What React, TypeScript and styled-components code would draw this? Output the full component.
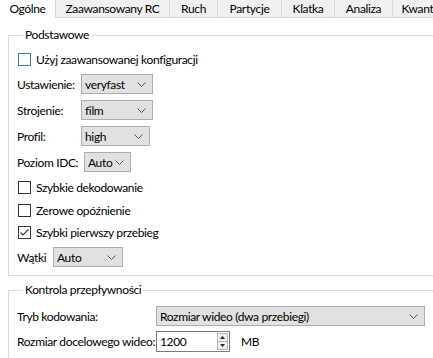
import React from "react";
import styled, { createGlobalStyle } from "styled-components";

const GlobalStyle = createGlobalStyle`
  html, body {
    margin: 0;
    padding: 0;
    overflow: hidden;
    background: #fff;
  }
  body {
    font-family: Lato, "Noto Sans", sans-serif;
    font-size: 12px;
    letter-spacing: -0.35px;
    color: #000;
  }
`;

interface ITab {
  label: string;
  width: number;
}

const tabs: ITab[] = [
  { label: "Ogólne", width: 56 },
  { label: "Zaawansowany RC", width: 114 },
  { label: "Ruch", width: 48 },
  { label: "Partycje", width: 64 },
  { label: "Klatka", width: 53 },
  { label: "Analiza", width: 58 },
  { label: "Kwantyzacja", width: 80 },
];

const Chevron = () => (
  <svg width="9" height="5" viewBox="0 0 9 5">
    <path d="M0.5 0.5 L4.5 4.5 L8.5 0.5" fill="none" stroke="#555" strokeWidth="1" />
  </svg>
);

interface ComboProps {
  value: string;
  width: number;
}

const Combo = ({ value, width }: ComboProps) => (
  <ComboBox $width={width}>
    <span>{value}</span>
    <Chevron />
  </ComboBox>
);

interface CheckProps {
  label: string;
  checked?: boolean;
  focused?: boolean;
}

const Check = ({ label, checked, focused }: CheckProps) => (
  <CheckLabel>
    <CheckBox $focused={focused}>
      {checked && (
        <svg width="11" height="11" viewBox="0 0 11 11">
          <path d="M1.5 5.5 L4 8 L9.5 2.5" fill="none" stroke="#333" strokeWidth="1.1" />
        </svg>
      )}
    </CheckBox>
    {label}
  </CheckLabel>
);

const SpinBox = ({ value }: { value: string }) => (
  <Spin>
    <SpinText>{value}</SpinText>
    <SpinButtons>
      <SpinButton>
        <svg width="5" height="3" viewBox="0 0 5 3">
          <path d="M0 3 L2.5 0 L5 3 Z" fill="#222" />
        </svg>
      </SpinButton>
      <SpinButton>
        <svg width="5" height="3" viewBox="0 0 5 3">
          <path d="M0 0 L2.5 3 L5 0 Z" fill="#222" />
        </svg>
      </SpinButton>
    </SpinButtons>
  </Spin>
);

export default function App() {
  return (
    <>
      <GlobalStyle />
      <Window>
        <TabBar>
          {tabs.map((t, i) => (
            <Tab key={t.label} $width={t.width} $active={i === 0}>
              {t.label}
            </Tab>
          ))}
          <TabFill />
        </TabBar>
        <Panel>
          <Group>
            <Legend>Podstawowe</Legend>
            <Rows $top={5} $bottom={5}>
              <Row $height={24}>
                <Check label="Użyj zaawansowanej konfiguracji" focused />
              </Row>
              <Row $height={26}>
                <Label $width={64}>Ustawienie:</Label>
                <Combo value="veryfast" width={72} />
              </Row>
              <Row $height={26}>
                <Label $width={64}>Strojenie:</Label>
                <Combo value="film" width={72} />
              </Row>
              <Row $height={26}>
                <Label $width={64}>Profil:</Label>
                <Combo value="high" width={69} />
              </Row>
              <Row $height={26}>
                <Label $width={67}>Poziom IDC:</Label>
                <Combo value="Auto" width={47} />
              </Row>
              <Row $height={24}>
                <Check label="Szybkie dekodowanie" />
              </Row>
              <Row $height={22}>
                <Check label="Zerowe opóźnienie" />
              </Row>
              <Row $height={23}>
                <Check label="Szybki pierwszy przebieg" checked />
              </Row>
              <Row $height={26}>
                <Label $width={36}>Wątki</Label>
                <Combo value="Auto" width={70} />
              </Row>
            </Rows>
          </Group>
          <Group $gap={7}>
            <Legend>Kontrola przepływności</Legend>
            <Rows $top={5} $bottom={10}>
              <Row $height={28}>
                <Label $width={139}>Tryb kodowania:</Label>
                <Combo value="Rozmiar wideo (dwa przebiegi)" width={269} />
              </Row>
              <Row $height={22}>
                <Label $width={139}>Rozmiar docelowego wideo:</Label>
                <SpinBox value="1200" />
                <Unit>MB</Unit>
              </Row>
            </Rows>
          </Group>
        </Panel>
      </Window>
    </>
  );
}

const Window = styled.div`
  width: 460px;
  height: 358px;
  overflow: hidden;
  background: #fff;
`;

const TabBar = styled.div`
  display: flex;
  height: 18px;
`;

const Tab = styled.div<{ $width: number; $active?: boolean }>`
  flex: none;
  box-sizing: border-box;
  width: ${(p) => p.$width}px;
  height: 18px;
  display: flex;
  align-items: center;
  justify-content: center;
  padding-bottom: 1px;
  background: ${(p) => (p.$active ? "#fff" : "#f0f0f0")};
  border-right: 1px solid #d9d9d9;
  border-bottom: 1px solid ${(p) => (p.$active ? "#fff" : "#d9d9d9")};
  white-space: nowrap;
  overflow: hidden;
`;

const TabFill = styled.div`
  flex: 1;
  border-bottom: 1px solid #d9d9d9;
`;

const Panel = styled.div`
  padding: 10px 0 0 8px;
`;

const Group = styled.fieldset<{ $gap?: number }>`
  margin: ${(p) => p.$gap ?? 0}px 0 0 0;
  padding: 0 0 0 9px;
  border: 1px solid #dcdcdc;
  min-width: 0;
`;

const Legend = styled.legend`
  margin-left: 5px;
  padding: 0 2px;
  line-height: 14px;
`;

const Rows = styled.div<{ $top: number; $bottom: number }>`
  display: flex;
  flex-direction: column;
  padding: ${(p) => p.$top}px 0 ${(p) => p.$bottom}px 0;
`;

const Row = styled.div<{ $height: number }>`
  display: flex;
  align-items: center;
  height: ${(p) => p.$height}px;
`;

const Label = styled.span<{ $width: number }>`
  flex: none;
  width: ${(p) => p.$width}px;
  margin-left: -1px;
  white-space: nowrap;
`;

const ComboBox = styled.div<{ $width: number }>`
  box-sizing: border-box;
  width: ${(p) => p.$width}px;
  height: 20px;
  display: flex;
  align-items: center;
  justify-content: space-between;
  padding: 0 6px 0 3px;
  background: #e1e1e1;
  border: 1px solid #adadad;
  white-space: nowrap;
`;

const CheckLabel = styled.label`
  display: flex;
  align-items: center;
  gap: 5px;
  white-space: nowrap;
`;

const CheckBox = styled.span<{ $focused?: boolean }>`
  box-sizing: border-box;
  width: 13px;
  height: 13px;
  display: flex;
  align-items: center;
  justify-content: center;
  background: #fff;
  border: 1px solid ${(p) => (p.$focused ? "#3c7fb1" : "#333")};
`;

const Spin = styled.div`
  box-sizing: border-box;
  width: 74px;
  height: 21px;
  display: flex;
  background: #fff;
  border: 1px solid #7a7a7a;
`;

const SpinText = styled.span`
  flex: 1;
  display: flex;
  align-items: center;
  padding-left: 3px;
`;

const SpinButtons = styled.div`
  width: 9px;
  display: flex;
  flex-direction: column;
  margin: 1px 1px 1px 0;
  border: 1px solid #b5b5b5;
  background: #f0f0f0;
`;

const SpinButton = styled.div`
  flex: 1;
  display: flex;
  align-items: center;
  justify-content: center;
  &:first-child {
    border-bottom: 1px solid #b5b5b5;
  }
`;

const Unit = styled.span`
  margin-left: 11px;
`;
